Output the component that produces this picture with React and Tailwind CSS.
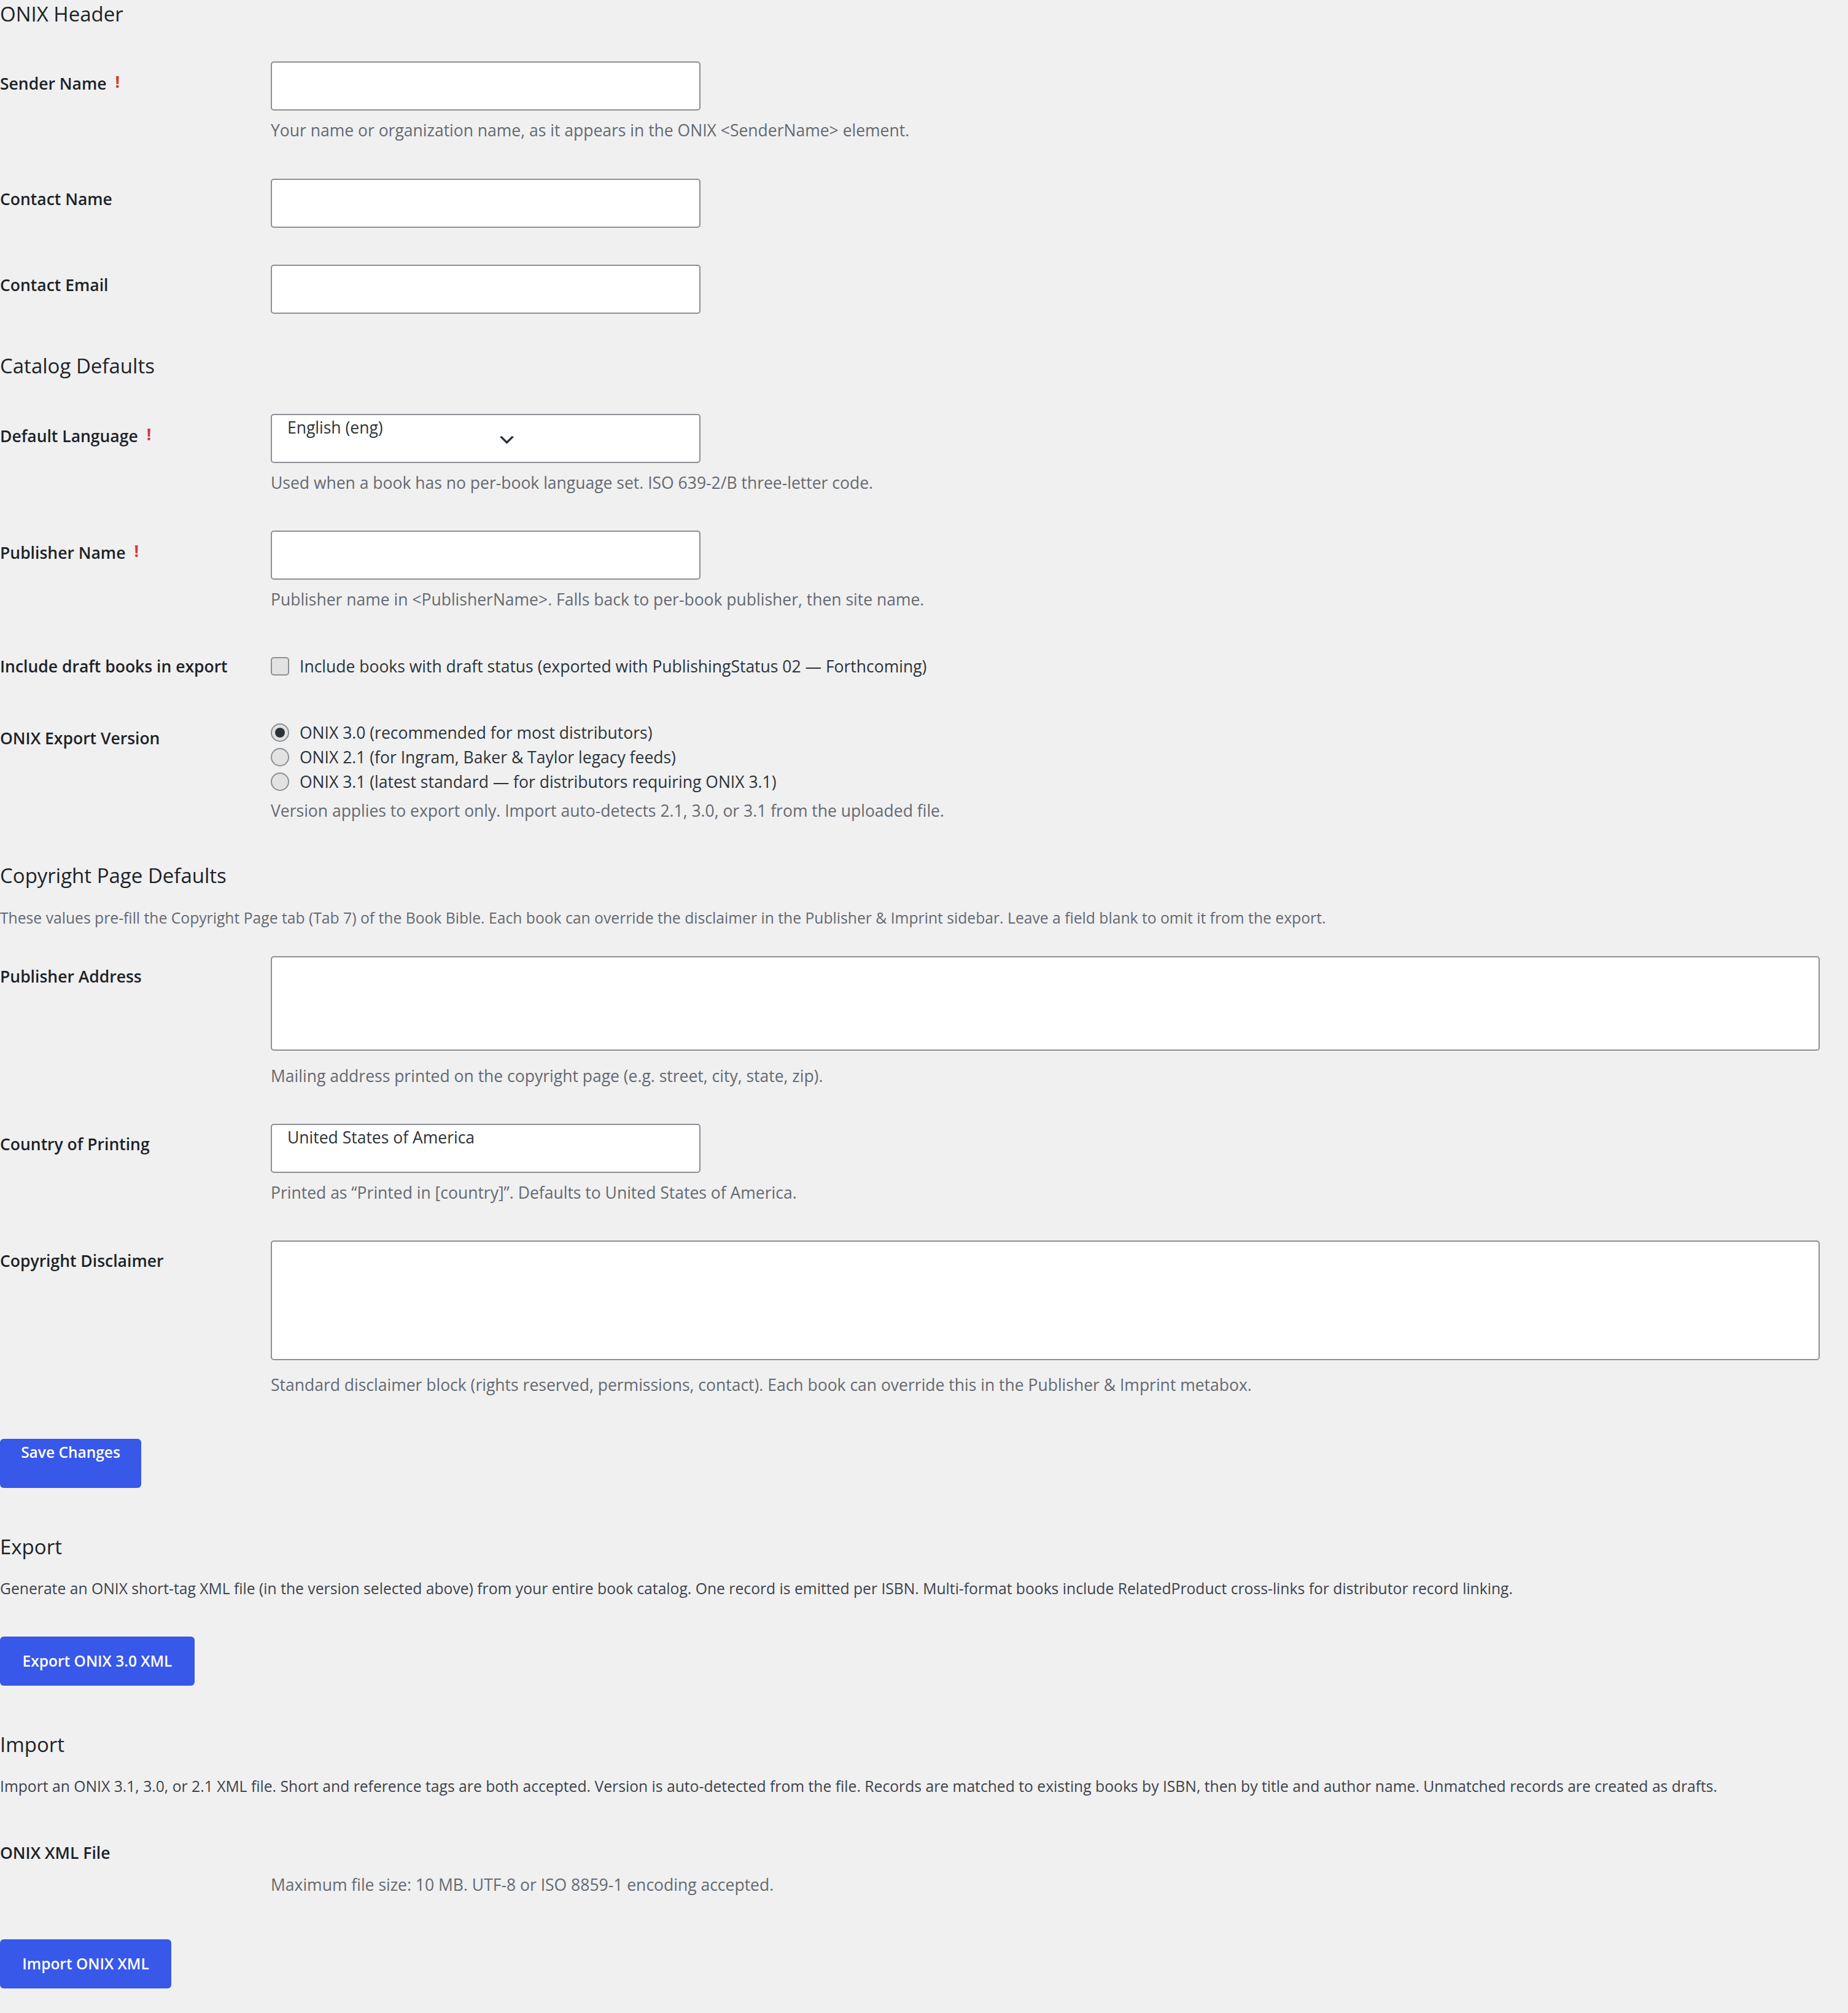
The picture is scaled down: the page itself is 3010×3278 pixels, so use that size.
import { useState } from "react";

const LABEL = "text-[26.5px]/[36px] font-semibold text-[#1d2327]";
const DESC = "text-[26.5px]/[36px] text-[#646970]";
const INPUT =
  "block w-[700px] h-[80px] border-2 border-[#8c8f94] rounded-[5px] bg-white pl-[25px] pr-[16px] pt-[2px] pb-[38px] text-[26.5px]/[36px] text-[#2c3338] outline-none";
const AREA =
  "block w-full border-2 border-[#8c8f94] rounded-[5px] bg-white resize-none outline-none";
const H2 = "text-[33px]/[44px] font-medium text-[#1d2327]";
const INTRO = "text-[24.7px]/[34px]";
const BUTTON =
  "flex h-[80px] justify-center rounded-[6px] bg-[#3858e9] text-[24.5px]/[34px] font-semibold text-white";

function Row({ label, required, className = "", labelClass = "pt-[15px]", children }) {
  return (
    <div className={`grid grid-cols-[441px_1fr] ${className}`}>
      <div className={`${LABEL} ${labelClass}`}>
        {label}
        {required && <span className="ml-[14px] align-[3px] font-bold text-[#d63638]">!</span>}
      </div>
      <div>{children}</div>
    </div>
  );
}

function Radio({ checked, label, onClick }) {
  return (
    <label onClick={onClick} className="flex h-[40px] items-center gap-[17px] cursor-pointer">
      <span className="flex size-[30px] items-center justify-center rounded-full border-2 border-[#8c8f94] bg-[#e2e2e2]">
        {checked && <span className="size-[16px] rounded-full bg-[#2c3338]" />}
      </span>
      <span className="text-[26.5px]/[40px] text-[#2c3338]">{label}</span>
    </label>
  );
}

export default function App() {
  const [version, setVersion] = useState("3.0");
  const [draft, setDraft] = useState(false);

  return (
    <div className="min-h-[3278px] w-full bg-[#f0f0f1] pr-[46px] pb-[40px] font-['Open_Sans',sans-serif]">
      <h2 className={`${H2} pt-[1px]`}>ONIX Header</h2>

      <Row label="Sender Name" required className="mt-[55px]">
        <input type="text" className={INPUT} />
        <p className={`${DESC} mt-[14px]`}>
          Your name or organization name, as it appears in the ONIX &lt;SenderName&gt; element.
        </p>
      </Row>

      <Row label="Contact Name" className="mt-[61px]">
        <input type="text" className={INPUT} />
      </Row>

      <Row label="Contact Email" className="mt-[60px]">
        <input type="email" className={INPUT} />
      </Row>

      <h2 className={`${H2} mt-[63px]`}>Catalog Defaults</h2>

      <Row label="Default Language" required className="mt-[56px]">
        <div className="relative w-[700px]">
          <select defaultValue="eng" className={`${INPUT} appearance-none`}>
            <option value="eng">English (eng)</option>
          </select>
          <svg
            viewBox="0 0 20 20"
            className="pointer-events-none absolute left-[368px] top-[26px] size-[33px] fill-[#2c3338]"
          >
            <path d="M5 6l5 5 5-5 2 1-7 7-7-7 2-1z" />
          </svg>
        </div>
        <p className={`${DESC} mt-[14px]`}>
          Used when a book has no per-book language set. ISO 639-2/B three-letter code.
        </p>
      </Row>

      <Row label="Publisher Name" required className="mt-[60px]">
        <input type="text" className={INPUT} />
        <p className={`${DESC} mt-[14px]`}>
          Publisher name in &lt;PublisherName&gt;. Falls back to per-book publisher, then site name.
        </p>
      </Row>

      <Row label="Include draft books in export" labelClass="" className="mt-[73px]">
        <label
          onClick={() => setDraft(!draft)}
          className="flex h-[36px] items-center gap-[17px] cursor-pointer"
        >
          <span className="flex size-[30px] items-center justify-center rounded-[5px] border-2 border-[#8c8f94] bg-[#e2e2e2]">
            {draft && (
              <svg viewBox="0 0 20 20" className="size-[26px] fill-[#3858e9]">
                <path d="M14.83 4.89l1.34.94-5.81 8.38H9.02L5.78 9.67l1.34-1.25 2.57 2.4z" />
              </svg>
            )}
          </span>
          <span className="text-[26.5px]/[36px] text-[#2c3338]">
            Include books with draft status (exported with PublishingStatus 02 — Forthcoming)
          </span>
        </label>
      </Row>

      <Row label="ONIX Export Version" labelClass="pt-[11px]" className="mt-[70px]">
        <Radio
          checked={version === "3.0"}
          onClick={() => setVersion("3.0")}
          label="ONIX 3.0 (recommended for most distributors)"
        />
        <Radio
          checked={version === "2.1"}
          onClick={() => setVersion("2.1")}
          label="ONIX 2.1 (for Ingram, Baker & Taylor legacy feeds)"
        />
        <Radio
          checked={version === "3.1"}
          onClick={() => setVersion("3.1")}
          label="ONIX 3.1 (latest standard — for distributors requiring ONIX 3.1)"
        />
        <p className={`${DESC} mt-[9px]`}>
          Version applies to export only. Import auto-detects 2.1, 3.0, or 3.1 from the uploaded file.
        </p>
      </Row>

      <h2 className={`${H2} mt-[66px]`}>Copyright Page Defaults</h2>
      <p className={`${INTRO} mt-[30px] text-[#646970]`}>
        These values pre-fill the Copyright Page tab (Tab 7) of the Book Bible. Each book can override the
        disclaimer in the Publisher &amp; Imprint sidebar. Leave a field blank to omit it from the export.
      </p>

      <Row label="Publisher Address" className="mt-[45px]">
        <textarea readOnly className={`${AREA} h-[154px]`} />
        <p className={`${DESC} mt-[23px]`}>
          Mailing address printed on the copyright page (e.g. street, city, state, zip).
        </p>
      </Row>

      <Row label="Country of Printing" className="mt-[60px]">
        <input type="text" defaultValue="United States of America" className={INPUT} />
        <p className={`${DESC} mt-[14px]`}>
          Printed as “Printed in [country]”. Defaults to United States of America.
        </p>
      </Row>

      <Row label="Copyright Disclaimer" className="mt-[60px]">
        <textarea readOnly className={`${AREA} h-[195px]`} />
        <p className={`${DESC} mt-[22px]`}>
          Standard disclaimer block (rights reserved, permissions, contact). Each book can override this in
          the Publisher &amp; Imprint metabox.
        </p>
      </Row>

      <button className={`${BUTTON} mt-[70px] w-[230px] items-start pt-[5px]`}>Save Changes</button>

      <h2 className={`${H2} mt-[74px]`}>Export</h2>
      <p className={`${INTRO} mt-[29px] text-[#3c434a]`}>
        Generate an ONIX short-tag XML file (in the version selected above) from your entire book catalog.
        One record is emitted per ISBN. Multi-format books include RelatedProduct cross-links for
        distributor record linking.
      </p>
      <button className={`${BUTTON} mt-[61px] w-[317px] items-center`}>Export ONIX 3.0 XML</button>

      <h2 className={`${H2} mt-[74px]`}>Import</h2>
      <p className={`${INTRO} mt-[29px] text-[#3c434a]`}>
        Import an ONIX 3.1, 3.0, or 2.1 XML file. Short and reference tags are both accepted. Version is
        auto-detected from the file. Records are matched to existing books by ISBN, then by title and
        author name. Unmatched records are created as drafts.
      </p>

      <Row label="ONIX XML File" labelClass="" className="mt-[73px]">
        <p className={`${DESC} mt-[52px]`}>Maximum file size: 10 MB. UTF-8 or ISO 8859-1 encoding accepted.</p>
      </Row>

      <button className={`${BUTTON} mt-[71px] w-[279px] items-center`}>Import ONIX XML</button>
    </div>
  );
}
